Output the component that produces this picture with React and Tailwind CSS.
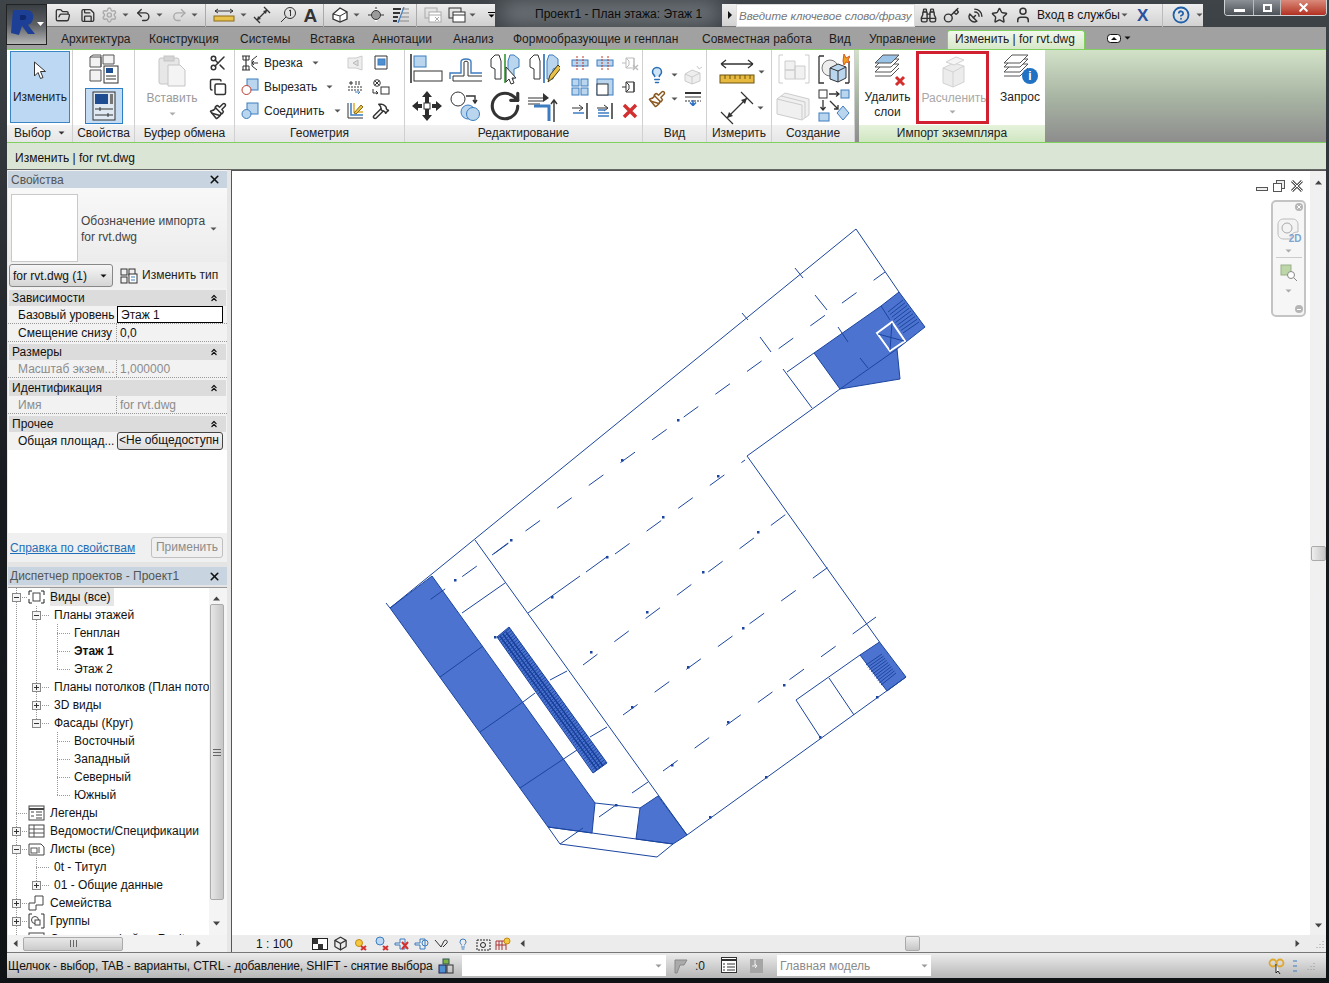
import React from 'react';
import {
  FolderOpen, Save, Undo2, Redo2, Scissors, Copy, Paintbrush, Lightbulb, Hammer, X, ChevronsUp,
  Key, Star, User, Binoculars, SatelliteDish, CircleHelp, RotateCw, Settings, Box
} from 'lucide-react';

const S = ({ w = 16, h = 16, className = '', children }) => (
  <svg width={w} height={h} viewBox={`0 0 ${w} ${h}`} fill="none" className={`shrink-0 ${className}`}>{children}</svg>
);

const Caret = ({ c = '#555', className = '' }) => (
  <S w={7} h={4} className={className}><path d="M0.5 0.5H6.5L3.5 3.5Z" fill={c} /></S>
);

const BLUE = '#3d7cc0';
const LB = '#b9d6ee';
const DK = '#333';

// --- quick access toolbar ---
const MeasureIc = () => (
  <S w={22} h={14}>
    <path d="M2 3H20M2 3L5 1M2 3L5 5M20 3L17 1M20 3L17 5" stroke={DK} />
    <rect x="1" y="8" width="20" height="5" fill="#e8c14a" stroke="#8a6d1b" />
  </S>
);
const AlignedIc = () => (
  <S w={20} h={20}>
    <path d="M2 12L8 18M12 2L18 8M5 15L15 5" stroke={DK} strokeWidth="1.3" />
    <path d="M5 15L9 14L6 11ZM15 5L11 6L14 9Z" fill={DK} />
  </S>
);
const TagIc = () => (
  <S w={18} h={18}>
    <circle cx="11" cy="7" r="5.5" stroke={DK} />
    <path d="M7 11L2 16" stroke={DK} />
    <path d="M10 5L11.5 4V10" stroke={DK} />
  </S>
);
const HouseIc = () => (
  <S w={18} h={18}>
    <path d="M2 8L9 2L16 6V13L9 16L2 13Z" stroke={DK} strokeWidth="1.3" fill="#fff" />
    <path d="M2 8L9 10L16 6M9 10V16" stroke={DK} />
  </S>
);
const SectionIc = () => (
  <S w={16} h={16}>
    <path d="M8 1L14 8L8 15L2 8Z" fill="#fff" />
    <circle cx="8" cy="8" r="4.5" fill="#9a9a9a" stroke={DK} />
    <path d="M0 8H3M13 8H16M8 0V2" stroke={DK} />
  </S>
);
const ThinIc = () => (
  <S w={18} h={16}>
    <path d="M1 2H9M1 6H8M1 10H6M1 14H5" stroke={DK} strokeWidth="2" />
    <path d="M10 2H17M10 6H17M8 10H17M7 14H17" stroke="#888" />
    <path d="M12 0L6 16" stroke="#3d7cc0" strokeWidth="1.2" />
  </S>
);
const WinIc = ({ gray }) => (
  <S w={18} h={16}>
    <rect x="1" y="1" width="12" height="10" stroke={gray ? '#aaa' : DK} />
    <rect x="5" y="5" width="12" height="10" fill="#fff" stroke={gray ? '#aaa' : DK} />
    <path d="M5 8H17" stroke={gray ? '#aaa' : DK} />
    {gray && <path d="M11 10L15 14M15 10L11 14" stroke="#aaa" />}
  </S>
);

const QAT = () => (
  <div className="w-[448px] h-[23px] shrink-0 flex items-center pl-[7px] bg-gradient-to-b from-[#eeeeee] to-[#cfcfcf] border-b border-[#777]">
    <FolderOpen size={17} color={DK} className="ml-px" />
    <Save size={17} color={DK} className="ml-[9px]" />
    <Settings size={18} color="#aaa" className="ml-[6px]" />
    <Caret className="ml-[4px]" />
    <Undo2 size={18} color={DK} className="ml-[6px]" />
    <Caret className="ml-[4px]" />
    <Redo2 size={18} color="#aaa" className="ml-[8px]" />
    <Caret className="ml-[4px]" />
    <div className="w-px h-[23px] bg-[#aaa] ml-[7px]" />
    <div className="ml-[7px]"><MeasureIc /></div>
    <Caret className="ml-[5px]" />
    <div className="ml-[5px]"><AlignedIc /></div>
    <div className="ml-[7px]"><TagIc /></div>
    <span className="ml-[6px] text-[19px] font-bold text-[#333] leading-none">A</span>
    <div className="w-px h-[23px] bg-[#aaa] ml-[6px]" />
    <div className="ml-[7px]"><HouseIc /></div>
    <Caret className="ml-[4px]" />
    <div className="ml-[8px]"><SectionIc /></div>
    <div className="ml-[8px]"><ThinIc /></div>
    <div className="w-px h-[23px] bg-[#aaa] ml-[6px]" />
    <div className="ml-[7px]"><WinIc gray /></div>
    <div className="ml-[6px]"><WinIc /></div>
    <Caret className="ml-[3px]" />
    <div className="ml-[12px] flex flex-col items-center gap-px"><div className="w-[7px] h-px bg-black" /><Caret c="#000" /></div>
  </div>
);

const InfoCenter = () => (
  <div className="w-[481px] h-[23px] shrink-0 flex items-center bg-gradient-to-b from-[#eeeeee] to-[#d2d2d2] border-b border-[#777]">
    <S w={6} h={8} className="ml-[5px]"><path d="M1 0L5 4L1 8Z" fill="#111" /></S>
    <div className="ml-[3px] w-[179px] h-[23px] bg-white border border-[#ddd] pl-[2px] text-[11.5px] italic text-[#777] leading-[23px] whitespace-nowrap overflow-hidden">Введите ключевое слово/фразу</div>
    <Binoculars size={17} color={DK} className="ml-[5px]" />
    <Key size={17} color={DK} className="ml-[6px]" />
    <SatelliteDish size={17} color={DK} className="ml-[7px]" />
    <Star size={17} color={DK} className="ml-[7px]" />
    <User size={18} color={DK} className="ml-[6px]" />
    <span className="ml-[5px] text-[12px] text-[#111] whitespace-nowrap w-[82px]">Вход в службы</span>
    <Caret className="ml-[2px]" />
    <span className="ml-[9px] text-[17px] font-black text-[#2c4f9e] leading-none w-[16px]">X</span>
    <div className="w-px h-[23px] bg-[#bbb] ml-[9px]" />
    <CircleHelp size={18} color="#1d5fa8" strokeWidth={2.4} className="ml-[9px]" />
    <Caret className="ml-[6px]" />
  </div>
);

const WinButtons = () => (
  <div className="ml-[21px] w-[103px] h-[16px] shrink-0 flex rounded-b-[4px] border border-t-0 border-[#cfd3d6] overflow-hidden">
    <div className="w-[29px] flex items-end justify-center pb-[3px] bg-gradient-to-b from-[#8b9197] to-[#4c5257] border-r border-[#bbb]"><div className="w-[11px] h-[3px] bg-white" /></div>
    <div className="w-[27px] flex items-center justify-center bg-gradient-to-b from-[#8b9197] to-[#4c5257] border-r border-[#bbb]"><div className="w-[9px] h-[8px] border-2 border-white" /></div>
    <div className="flex-1 flex items-center justify-center bg-gradient-to-b from-[#d9897a] to-[#b32e20]"><X size={13} color="#fff" strokeWidth={4} /></div>
  </div>
);

const Logo = () => (
  <div className="absolute left-[6px] top-[4px] w-[41px] h-[41px] border border-[#222] bg-gradient-to-b from-[#3a3f44] via-[#5c6064] to-[#b5b5b5] z-10">
    <S w={39} h={39}>
      <path d="M6 5H19C25 5 27 9 26 14C25 18 23 19 21 20L28 29H21L15 21L12 30L4 28Z" fill="#1d3f96" />
      <path d="M13 10L17 10C20 10 20 14 17 15L13 15Z" fill="#0f2a70" />
      <path d="M30 17H37L33.5 21Z" fill="#fff" />
    </S>
  </div>
);

// --- ribbon icons ---
const Cursor = () => (
  <S w={15} h={19}><path d="M1.5 1V15L5 11.5L7.5 17.5L10 16.5L7.5 10.5H12.5Z" fill="#fff" stroke={DK} /></S>
);
const Cubes = () => (
  <S w={32} h={30}>
    <path d="M2 3H13V13H2ZM15 1H26V10H15ZM2 16H13V27H2Z" fill="#f2f2f2" stroke="#555" />
    <path d="M5 1H13M2 3L5 1M13 1V13" stroke="#555" />
    <rect x="16" y="12" width="14" height="17" fill="#fff" stroke={DK} />
    <rect x="18" y="14" width="7" height="5" fill="#1f4d91" />
    <path d="M18 22H28M18 25H28" stroke={DK} />
  </S>
);
const Props = () => (
  <S w={24} h={30}>
    <rect x="1" y="1" width="22" height="28" fill="#dfe9f3" stroke={DK} />
    <rect x="3" y="3" width="13" height="10" fill="#1f4d91" />
    <rect x="18" y="3" width="3" height="10" fill="#777" />
    <path d="M3 18H21M3 24H21M8 16V20M16 22V26" stroke={DK} />
  </S>
);
const Clip = () => (
  <S w={28} h={32}>
    <rect x="1" y="3" width="20" height="26" rx="2" fill="#e7e7e7" stroke="#c5c5c5" />
    <rect x="6" y="1" width="10" height="5" fill="#d5d5d5" stroke="#c5c5c5" />
    <path d="M10 10H22L27 15V31H10Z" fill="#f4f4f4" stroke="#c5c5c5" />
  </S>
);
const Cope = () => (
  <S w={18} h={16}>
    <path d="M1 1H9M1 15H9M5 1V15" stroke={DK} strokeWidth="1.2" />
    <path d="M2 1V5H8V1M2 15V11H8V15" stroke={DK} />
    <path d="M16 1L11 5V11L16 15M17 8H11M13 6L11 8L13 10" stroke={DK} />
  </S>
);
const CutGeo = () => (
  <S w={18} h={18}>
    <rect x="6" y="1" width="11" height="11" fill={LB} stroke={BLUE} />
    <circle cx="5.5" cy="12" r="4.5" fill="#fff" stroke="#c0392b" />
  </S>
);
const JoinGeo = () => (
  <S w={18} h={18}>
    <rect x="6" y="1" width="11" height="11" fill={LB} stroke={BLUE} />
    <circle cx="5.5" cy="12" r="4.5" fill={LB} stroke={BLUE} />
  </S>
);
const Wall1 = () => (
  <S w={16} h={16}>
    <path d="M1 3H9L15 1V15L9 13H1Z" fill="#eee" stroke="#ccc" />
    <path d="M6 8L11 5V11Z" fill="#ddd" stroke="#bbb" />
  </S>
);
const Wall2 = () => (
  <S w={16} h={16}>
    <path d="M2 1H14V14H2Z" fill="#fff" stroke="#333" />
    <rect x="5" y="4" width="7" height="6" fill="#4d8fd1" stroke={BLUE} />
  </S>
);
const Lines2 = () => (
  <S w={17} h={15}>
    <path d="M4 1V5M2 3H6" stroke={DK} /><path d="M9 1V5M12 1V5" stroke={DK} />
    <path d="M1 7H16M1 10H16" stroke={DK} strokeDasharray="2 1" />
    <path d="M8 12H13M11 14L13 12" stroke={BLUE} />
  </S>
);
const Cut3 = () => (
  <S w={18} h={16}>
    <circle cx="5" cy="4" r="3.3" stroke={DK} /><path d="M3 2L7 6M7 2L3 6" stroke={DK} />
    <rect x="9" y="8" width="8" height="7" fill="#fff" stroke={DK} />
    <path d="M1 10V14H6M4 12L6 14L4 15" stroke={DK} />
  </S>
);
const Corner = () => (
  <S w={18} h={18}>
    <path d="M2 1V16H17" stroke={DK} /><path d="M5 1V13H17" stroke={BLUE} strokeWidth="1.5" />
    <path d="M8 1V10H17" stroke="#e0a92e" strokeWidth="1.5" />
    <path d="M8 11L15 3L17 5L10 12Z" fill="#e8c14a" stroke="#8a6d1b" />
  </S>
);

const Align = () => (
  <S w={34} h={30}>
    <path d="M1 0V29" stroke={DK} strokeWidth="1.6" />
    <rect x="4" y="2" width="12" height="11" fill={LB} stroke={BLUE} />
    <rect x="4" y="17" width="28" height="10" fill="#fff" stroke={DK} />
  </S>
);
const Offset = () => (
  <S w={34} h={26}>
    <path d="M1 23V17H12V6C12 2 22 2 22 6V17H33" stroke={BLUE} strokeWidth="1.4" />
    <path d="M4 25H33M4 25V20H15V6C15 5 19 5 19 6V20H33" stroke={DK} />
  </S>
);
const Mirror = ({ draw }) => (
  <S w={32} h={32}>
    <path d="M2 6L6 2H10L12 8V26H6L6 16L2 14Z" fill="#fff" stroke={DK} />
    <path d="M16 1V30" stroke={draw ? '#3d7cc0' : '#4aa34a'} strokeWidth="1.8" />
    <path d="M30 6L25 2H21L19 8V26H25V16L30 14Z" fill={LB} stroke={BLUE} />
    {draw
      ? <path d="M20 29L22 22L30 12L33 15L25 25Z" fill="#e8c14a" stroke="#4a3a10" />
      : <path d="M17 14V29L20 26L22 31L25 30L23 25H27Z" fill="#fff" stroke={DK} />}
  </S>
);
const MoveIc = () => (
  <S w={32} h={32}>
    <path d="M16 1L21 7H18V13H14V7H11ZM16 31L21 25H18V19H14V25H11ZM1 16L7 11V14H11V18H7V21ZM31 16L25 11V14H21V18H25V21Z" fill="#2d2d2d" />
    <rect x="13" y="13" width="6" height="6" fill="#fff" stroke={DK} />
  </S>
);
const CopyMv = () => (
  <S w={32} h={30}>
    <circle cx="8" cy="8" r="7" fill="#fff" stroke={DK} />
    <path d="M16 5H25V11M23 9L25 12L27 9" stroke={DK} strokeWidth="1.4" />
    <circle cx="18" cy="21" r="7" fill={LB} stroke={BLUE} />
    <circle cx="23" cy="23" r="6.5" fill={LB} stroke={BLUE} />
  </S>
);
const Trim = () => (
  <S w={34} h={34}>
    <path d="M1 9H20M1 12H16M1 15H13" stroke={DK} />
    <path d="M16 4L22 9L16 13Z" fill={DK} />
    <path d="M7 17H22V32" stroke={BLUE} strokeWidth="3" fill="none" />
    <path d="M27 33V12M24 15L27 11L30 15" stroke={DK} strokeWidth="1.4" />
  </S>
);
const SplitA = () => (
  <S w={18} h={14}>
    <rect x="1" y="4" width="16" height="6" fill={LB} stroke={BLUE} />
    <path d="M6 0V14M12 0V14" stroke="#c0392b" strokeDasharray="2 1" />
  </S>
);
const GridA = () => (
  <S w={18} h={18}><rect x="1" y="1" width="7" height="7" stroke={BLUE} fill={LB} /><rect x="10" y="1" width="7" height="7" stroke={BLUE} fill={LB} /><rect x="1" y="10" width="7" height="7" stroke={BLUE} fill={LB} /><rect x="10" y="10" width="7" height="7" stroke={BLUE} fill={LB} /></S>
);
const ScaleA = () => (
  <S w={18} h={18}><rect x="1" y="1" width="16" height="16" fill={LB} stroke={BLUE} /><rect x="1" y="6" width="11" height="11" fill="#fff" stroke={DK} /></S>
);
const PinOff = ({ x }) => (
  <S w={18} h={18}>
    <path d="M1 9H5M5 4H13V14H5ZM13 4V14M5 4L8 7V11L5 14" stroke={x ? '#bbb' : DK} />
    {x && <path d="M12 11L17 16M17 11L12 16" stroke="#bbb" strokeWidth="1.4" />}
  </S>
);
const Extend = ({ many }) => (
  <S w={18} h={18}>
    <path d="M16 1V17" stroke={DK} strokeWidth="1.5" />
    <path d="M1 6H11M8 3L12 6L8 9" stroke={DK} />
    <path d="M2 11H13" stroke={BLUE} strokeWidth="1.5" />
    {many && <path d="M2 14H13M2 8H9" stroke={BLUE} strokeWidth="1.5" />}
  </S>
);
const RedX = () => (
  <S w={16} h={16}><path d="M2 2L14 14M14 2L2 14" stroke="#d32f2f" strokeWidth="3.4" /></S>
);
const GrayBox = () => (
  <S w={22} h={20}>
    <path d="M3 9L10 5L18 8V16L10 19L3 16Z" fill="#eee" stroke="#ccc" />
    <path d="M3 9L10 12L18 8M10 12V19" stroke="#ccc" />
    <path d="M15 1L17 4L20 2" stroke="#ccc" />
  </S>
);
const Lw = () => (
  <S w={18} h={14}>
    <path d="M1 1H17" stroke={DK} strokeWidth="2" />
    <path d="M1 5H17" stroke={DK} />
    <path d="M1 9H17" stroke={DK} strokeDasharray="2 1" />
    <path d="M9 8V13M6 10.5L9 13.5L12 10.5" stroke="#2b6fc4" strokeWidth="1.6" />
  </S>
);
const RulerIc = () => (
  <S w={36} h={28}>
    <path d="M2 6H34M2 6L7 2M2 6L7 10M34 6L29 2M34 6L29 10" stroke={DK} strokeWidth="1.3" />
    <rect x="1" y="17" width="34" height="8" fill="#e7b93f" stroke="#6d5410" />
    <path d="M6 17V21M11 17V21M16 17V21M21 17V21M26 17V21M31 17V21" stroke="#6d5410" />
  </S>
);
const DimIc = () => (
  <S w={34} h={34}>
    <path d="M1 21L13 33M21 1L33 13M7 27L27 7" stroke={DK} strokeWidth="1.2" />
    <path d="M7 27L13 25L9 21ZM27 7L21 9L25 13Z" fill={DK} />
  </S>
);
const GroupGray = () => (
  <S w={32} h={30}>
    <path d="M1 1H5M1 1V29H5M31 1H27M31 1V29H27" stroke="#ccc" />
    <path d="M7 7H17V16H7ZM17 12H27V25H17ZM7 16H17V25H7Z" fill="#f1f1f1" stroke="#ccc" />
  </S>
);
const InPlace = () => (
  <S w={32} h={32}>
    <path d="M1 3H6M1 3V30H6M31 30H27M31 30V8" stroke={DK} strokeWidth="1.3" />
    <circle cx="12" cy="15" r="8" fill="#eee" stroke="#777" />
    <path d="M12 15L20 11L28 14V25L20 29L12 26Z" fill={LB} stroke={DK} />
    <path d="M12 15L20 18L28 14M20 18V29" stroke={DK} />
    <path d="M26 1L28 5L32 3L30 7L32 10L28 9L26 12L25 8Z" fill="#f0a020" stroke="#d9541e" />
  </S>
);
const Stack = () => (
  <S w={36} h={32}>
    <path d="M1 9L9 3L33 9V25L26 30L1 24Z" fill="#f0f0f0" stroke="#ccc" />
    <path d="M5 6L29 12V28M1 9L26 15V30" stroke="#ccc" />
  </S>
);
const CreateIc = () => (
  <S w={32} h={34}>
    <rect x="1" y="1" width="8" height="8" fill="#fff" stroke={DK} />
    <rect x="23" y="1" width="8" height="8" fill={LB} stroke={BLUE} />
    <path d="M11 5H21M18 2.5L21 5L18 7.5M5 11V21M2.5 18L5 21L7.5 18M12 12L20 20M16 20H20V16" stroke={DK} strokeWidth="1.3" />
    <rect x="1" y="24" width="10" height="8" fill={LB} stroke={BLUE} />
    <path d="M25 17L31 24L25 31L19 24Z" fill={LB} stroke={BLUE} />
  </S>
);
const Layers = ({ gray }) => (
  <S w={28} h={26}>
    <path d="M2 18H18L26 10H10Z" fill="#fff" stroke="#555" />
    <path d="M2 22H18L26 14" stroke="#555" />
    <path d="M2 13H18L26 5H10Z" fill="#fff" stroke="#555" />
    <path d="M2 9H18L26 1H10Z" fill={gray ? '#fff' : '#9cc4e6'} stroke="#555" />
  </S>
);
const Explode = () => (
  <S w={26} h={32}>
    <path d="M3 12L14 7L24 10V26L13 31L3 27Z" fill="#ececec" stroke="#d2d2d2" />
    <path d="M3 12L13 16L24 10M13 16V31" stroke="#d2d2d2" />
    <path d="M6 6L16 1L24 4L14 9Z" fill="#f5f5f5" stroke="#d2d2d2" />
  </S>
);

const Panel = ({ className = '', label, caret, green, children }) => (
  <div className={`flex flex-col border-r border-[#d0d0d0] bg-white ${className}`}>
    <div className="h-[75px] flex">{children}</div>
    <div className={`h-[17px] pb-[2px] flex items-center justify-center gap-[7px] text-[12px] text-[#222] whitespace-nowrap ${green ? 'bg-gradient-to-b from-[#e6f2dc] to-[#cfe6c0]' : 'bg-gradient-to-b from-[#f2f2f2] to-[#e6e6e6]'}`}>
      {label}{caret && <Caret c="#333" />}
    </div>
  </div>
);

const GeoRow = ({ icon, label, className = '' }) => (
  <div className={`h-[24px] flex items-center ${className}`}>
    <div className="w-[22px] flex justify-center">{icon}</div>
    <span className="ml-[3px] text-[12px] text-[#222] whitespace-nowrap">{label}</span>
    <Caret className="ml-[9px]" />
  </div>
);

const Cell = ({ className = '', children }) => <div className={`flex items-center justify-center ${className}`}>{children}</div>;

const Ribbon = () => (
  <div className="h-[94px] flex border-y border-[#7fd05e] bg-gradient-to-b from-[#d2e2c8] via-[#a9b6a4] to-[#8d8d8d]">
    <Panel className="w-[66px]" label="Выбор" caret>
      <div className="m-[1px] ml-[3px] w-[60px] h-[72px] bg-[#bcd8f2] border border-[#3c86c6] flex flex-col items-center pt-[9px]">
        <Cursor />
        <span className="mt-[8px] text-[12px] text-[#222]">Изменить</span>
      </div>
    </Panel>
    <Panel className="w-[62px]" label="Свойства">
      <div className="flex-1 flex flex-col items-center pt-[4px]">
        <Cubes />
        <div className="mt-[4px] w-[38px] h-[36px] bg-[#c5dcf3] border border-[#2d7fc8] flex items-center justify-center"><Props /></div>
      </div>
    </Panel>
    <Panel className="w-[100px]" label="Буфер обмена">
      <div className="w-[72px] flex flex-col items-center pt-[5px] pl-[2px]">
        <Clip />
        <span className="mt-[2px] text-[12px] text-[#9a9a9a]">Вставить</span>
        <Caret c="#aaa" className="mt-[5px]" />
      </div>
      <div className="flex flex-col items-center gap-[6px] pt-[4px] ml-[2px]">
        <Scissors size={18} color={DK} />
        <Copy size={18} color={DK} />
        <Paintbrush size={18} color={DK} />
      </div>
    </Panel>
    <Panel className="w-[170px]" label="Геометрия">
      <div className="w-[107px] pt-px pl-[4px]">
        <GeoRow icon={<Cope />} label="Врезка" />
        <GeoRow icon={<CutGeo />} label="Вырезать" />
        <GeoRow icon={<JoinGeo />} label="Соединить" />
      </div>
      <div className="w-[26px] pt-px flex flex-col">
        <Cell className="h-[24px]"><Wall1 /></Cell>
        <Cell className="h-[24px]"><Lines2 /></Cell>
        <Cell className="h-[24px]"><Corner /></Cell>
      </div>
      <div className="w-[26px] pt-px flex flex-col">
        <Cell className="h-[24px]"><Wall2 /></Cell>
        <Cell className="h-[24px] gap-[3px]"><Cut3 /></Cell>
        <Cell className="h-[24px]"><Hammer size={18} color={DK} /></Cell>
      </div>
    </Panel>
    <Panel className="w-[238px]" label="Редактирование">
      <div className="ml-[3px] w-[157px] grid grid-cols-4 auto-rows-[37px]">
        <Cell><Align /></Cell>
        <Cell><Offset /></Cell>
        <Cell><Mirror /></Cell>
        <Cell><Mirror draw /></Cell>
        <Cell><MoveIc /></Cell>
        <Cell><CopyMv /></Cell>
        <Cell><RotateCw size={34} color={DK} strokeWidth={2.2} /></Cell>
        <Cell><Trim /></Cell>
      </div>
      <div className="ml-[5px] pt-px w-[75px] grid grid-cols-3 auto-rows-[24px]">
        <Cell><SplitA /></Cell>
        <Cell><SplitA /></Cell>
        <Cell><PinOff x /></Cell>
        <Cell><GridA /></Cell>
        <Cell><ScaleA /></Cell>
        <Cell><PinOff /></Cell>
        <Cell><Extend /></Cell>
        <Cell><Extend many /></Cell>
        <Cell><RedX /></Cell>
      </div>
    </Panel>
    <Panel className="w-[64px]" label="Вид">
      <div className="pt-[13px] grid grid-cols-[22px_12px_26px] auto-rows-[24px] pl-[3px]">
        <Cell><Lightbulb size={18} color="#2a6fb5" fill="#cfe4f7" /></Cell>
        <Cell><Caret /></Cell>
        <Cell><GrayBox /></Cell>
        <Cell><Paintbrush size={18} color="#8a5a20" /></Cell>
        <Cell><Caret /></Cell>
        <Cell><Lw /></Cell>
      </div>
    </Panel>
    <Panel className="w-[65px]" label="Измерить">
      <div className="flex-1 flex flex-col">
        <Cell className="h-[41px] pt-[3px] gap-[3px] pl-[6px]"><RulerIc /><Caret /></Cell>
        <Cell className="h-[34px] gap-[3px] pl-[6px]"><DimIc /><Caret /></Cell>
      </div>
    </Panel>
    <Panel className="w-[83px]" label="Создание">
      <div className="flex-1 grid grid-cols-2 grid-rows-[37px_38px] pl-[2px]">
        <Cell><GroupGray /></Cell>
        <Cell><InPlace /></Cell>
        <Cell><Stack /></Cell>
        <Cell><CreateIc /></Cell>
      </div>
    </Panel>
    <div className="w-[4px]" />
    <Panel className="w-[186px] border-r-0" label="Импорт экземпляра" green>
      <div className="w-[57px] flex flex-col items-center pt-[4px]">
        <div className="relative h-[33px] w-[30px]">
          <Layers />
          <S w={12} h={12} className="absolute right-[-3px] bottom-0"><path d="M2 2L10 10M10 2L2 10" stroke="#d32f2f" strokeWidth="3" /></S>
        </div>
        <span className="mt-[3px] text-[12px] leading-[15px] text-center text-[#222]">Удалить<br />слои</span>
      </div>
      <div className="w-[73px] h-[73px] mt-px border-[3px] border-[#d1202f] flex flex-col items-center pt-[2px]">
        <Explode />
        <span className="mt-[1px] pl-[3px] text-[12px] text-[#a8a8a8]">Расчленить</span>
        <Caret c="#aaa" className="mt-[3px]" />
      </div>
      <div className="flex-1 flex flex-col items-center pt-[4px] pl-[6px]">
        <div className="relative h-[33px] w-[36px]">
          <Layers gray />
          <div className="absolute right-0 bottom-[3px] w-[16px] h-[16px] rounded-full bg-[#2272c3] text-white text-[12px] font-bold leading-[16px] text-center">i</div>
        </div>
        <span className="mt-[1px] text-[12px] text-[#222]">Запрос</span>
      </div>
    </Panel>
  </div>
);

const TABS = [
  ['Архитектура', 'w-[88px]'], ['Конструкция', 'w-[91px]'], ['Системы', 'w-[70px]'], ['Вставка', 'w-[62px]'],
  ['Аннотации', 'w-[81px]'], ['Анализ', 'w-[60px]'], ['Формообразующие и генплан', 'w-[189px]'],
  ['Совместная работа', 'w-[127px]'], ['Вид', 'w-[40px]'], ['Управление', 'w-[88px]'],
];

const Tabs = () => (
  <div className="h-[22px] flex items-end pl-[44px] bg-[#a1a1a1] text-[12px] text-[#1c1c1c] whitespace-nowrap">
    {TABS.map(([t, w]) => <div key={t} className={`${w} h-[22px] pl-[10px] leading-[24px]`}>{t}</div>)}
    <div className="w-[138px] h-[19px] pl-[7px] leading-[16px] rounded-t-[3px] border border-b-0 border-[#7fd05e] bg-gradient-to-b from-[#f2f8ec] to-[#d6e8c8]">Изменить | for rvt.dwg</div>
    <S w={14} h={9} className="ml-[22px] mb-[6px]"><rect x="0.5" y="0.5" width="13" height="8" rx="3" fill="#fff" stroke="#111" /><path d="M4 6H10L7 3Z" fill="#111" /></S>
    <Caret c="#111" className="ml-[3px] mb-[9px]" />
  </div>
);

// --- properties ---
const SectionHead = ({ label }) => (
  <div className="h-[16px] mt-[2px] mx-[1px] flex items-center justify-between pl-[3px] pr-[7px] bg-[#dcdcdc] text-[12px] text-[#111]">
    {label}<ChevronsUp size={10} strokeWidth={3} color="#111" />
  </div>
);
const Row = ({ label, value, gray }) => (
  <div className={`h-[18px] flex text-[12px] border-b border-dotted border-[#999] ${gray ? 'text-[#8c8c8c]' : 'text-[#111]'}`}>
    <div className="w-[109px] pl-[10px] leading-[18px] truncate border-r border-dotted border-[#999]">{label}</div>
    <div className="flex-1 pl-[3px] leading-[18px] whitespace-nowrap overflow-hidden">{value}</div>
  </div>
);

const Properties = () => (
  <div className="flex flex-col">
    <div className="h-[17px] mt-px flex items-center justify-between pl-[3px] pr-[6px] bg-[#c8d4df] text-[12px] text-[#555]">
      Свойства <X size={13} color="#111" strokeWidth={3} />
    </div>
    <div className="h-[74px] flex items-end bg-gradient-to-b from-[#f8f8f8] to-[#ececec] pl-[3px] pr-[3px]">
      <div className="w-[67px] h-[68px] bg-white border border-[#c9c9c9]" />
      <div className="ml-[3px] mb-[17px] text-[12px] leading-[16px] text-[#444] whitespace-nowrap w-[129px]">Обозначение импорта<br />for rvt.dwg</div>
      <Caret className="mb-[31px]" />
    </div>
    <div className="h-[26px] pt-px flex items-center bg-[#f0f0f0] pl-px">
      <div className="w-[104px] h-[23px] flex items-center justify-between pl-[3px] pr-[5px] rounded-[3px] border border-[#888] bg-gradient-to-b from-[#f6f6f6] to-[#d5d5d5] text-[12px] text-[#111] whitespace-nowrap">for rvt.dwg (1)<Caret c="#111" /></div>
      <S w={18} h={16} className="ml-[7px]"><rect x="1" y="1" width="6" height="6" stroke={DK} /><rect x="9" y="1" width="6" height="6" stroke={DK} /><rect x="1" y="9" width="6" height="6" stroke={DK} /><rect x="9" y="6" width="8" height="9" fill="#fff" stroke={DK} /><path d="M11 9H15M11 12H15" stroke={BLUE} /></S>
      <span className="ml-[4px] mb-[2px] text-[12px] text-[#222] whitespace-nowrap">Изменить тип</span>
    </div>
    <SectionHead label="Зависимости" />
    <div className="h-[18px] flex text-[12px] text-[#111] border-b border-dotted border-[#999]">
      <div className="w-[109px] pl-[10px] leading-[18px] truncate">Базовый уровень</div>
      <div className="w-[106px] pl-[3px] leading-[16px] border border-black bg-white">Этаж 1</div>
    </div>
    <Row label="Смещение снизу" value="0,0" />
    <SectionHead label="Размеры" />
    <Row label="Масштаб экзем..." value="1,000000" gray />
    <SectionHead label="Идентификация" />
    <Row label="Имя" value="for rvt.dwg" gray />
    <SectionHead label="Прочее" />
    <div className="h-[18px] flex text-[12px] text-[#111]">
      <div className="w-[109px] pl-[10px] leading-[18px] truncate">Общая площад...</div>
      <div className="w-[106px] pl-[1px] leading-[15px] rounded-[3px] border border-[#444] bg-gradient-to-b from-[#f4f4f4] to-[#dcdcdc] overflow-hidden whitespace-nowrap">&lt;Не общедоступн</div>
    </div>
    <div className="h-[83px] bg-white" />
    <div className="h-[29px] flex items-center justify-between pl-[2px] pr-[4px] bg-[#f0f0f0]">
      <span className="text-[12px] text-[#1f6fb8] underline">Справка по свойствам</span>
      <div className="w-[72px] h-[21px] rounded-[3px] border border-[#c0c0c0] text-center text-[12px] leading-[19px] text-[#8c8c8c]">Применить</div>
    </div>
    <div className="h-[5px] bg-[#e4e4e4]" />
  </div>
);

// --- project browser ---
const TREE = [
  { t: 'Виды (все)', d: 0, e: '-', ic: 'view', sel: true, v: [16] },
  { t: 'Планы этажей', d: 1, e: '-', v: [16, 36] },
  { t: 'Генплан', d: 2, v: [16, 36, 57] },
  { t: 'Этаж 1', d: 2, bold: true, v: [16, 36, 57] },
  { t: 'Этаж 2', d: 2, v: [16, 36], half: 57 },
  { t: 'Планы потолков (План потолка)', d: 1, e: '+', v: [16, 36] },
  { t: '3D виды', d: 1, e: '+', v: [16, 36] },
  { t: 'Фасады (Круг)', d: 1, e: '-', v: [16], half: 36 },
  { t: 'Восточный', d: 2, v: [16, 57] },
  { t: 'Западный', d: 2, v: [16, 57] },
  { t: 'Северный', d: 2, v: [16, 57] },
  { t: 'Южный', d: 2, v: [16], half: 57 },
  { t: 'Легенды', d: 0, ic: 'legend', v: [16] },
  { t: 'Ведомости/Спецификации', d: 0, e: '+', ic: 'table', v: [16] },
  { t: 'Листы (все)', d: 0, e: '-', ic: 'sheet', v: [16] },
  { t: '0t - Титул', d: 1, v: [16, 36] },
  { t: '01 - Общие данные', d: 1, e: '+', v: [16], half: 36 },
  { t: 'Семейства', d: 0, e: '+', ic: 'family', v: [16] },
  { t: 'Группы', d: 0, e: '+', ic: 'group', v: [16] },
  { t: 'Связанные файлы Revit', d: 0, ic: 'link', half: 16 },
];
const TEXT_X = [42, 46, 66];
const EXP_X = [12, 32];

const TreeIcon = ({ k }) => {
  const p = { stroke: '#444', fill: '#fff' };
  if (k === 'view') return <g><path d="M24 3H21V7M33 3H36V7M21 11V15H24M36 11V15H33" stroke="#222" /><rect x="25" y="5" width="7" height="8" {...p} /></g>;
  if (k === 'legend') return <g><rect x="21" y="2" width="15" height="14" {...p} /><path d="M21 5H36" stroke="#444" strokeWidth="2" /><path d="M23 8H26M23 12H26M28 8H34M28 11H34M28 14H34" stroke="#444" /></g>;
  if (k === 'table') return <g><rect x="21" y="3" width="15" height="12" {...p} /><path d="M21 7H36M21 11H36M26 3V15" stroke="#555" /></g>;
  if (k === 'sheet') return <g><path d="M21 4H33L36 7V15H21Z" {...p} /><rect x="23" y="8" width="6" height="5" stroke="#555" /><path d="M31 7V13" stroke="#555" /></g>;
  if (k === 'family') return <g><path d="M21 9H27V2H35V11H28V16H21Z" {...p} /></g>;
  if (k === 'group') return <g><path d="M24 2H21V16H24M33 2H36V16H33" stroke="#333" /><circle cx="27" cy="8" r="3.5" {...p} /><rect x="27" y="8" width="5" height="5" {...p} /></g>;
  return <g><rect x="21" y="3" width="15" height="12" {...p} /></g>;
};

const TreeRow = ({ t, d, e, ic, sel, bold, v = [], half }) => {
  const textX = TEXT_X[d];
  const ex = EXP_X[Math.min(d, 1)];
  return (
    <div className="h-[18px] flex items-center">
      <svg width={textX} height={18} viewBox={`8 0 ${textX} 18`} className="shrink-0" fill="none">
        {v.map((x) => <path key={x} d={`M${x + 0.5} 0V18`} stroke="#999" strokeDasharray="1 1" />)}
        {half && <path d={`M${half + 0.5} 0V9`} stroke="#999" strokeDasharray="1 1" />}
        <path d={`M${d === 2 ? 57 : ex + 4} 9.5H${d === 0 ? 28 : d === 1 ? 50 : 70}`} stroke="#999" strokeDasharray="1 1" />
        {e && (
          <g>
            <rect x={ex + 0.5} y="5.5" width="8" height="8" fill="#f4f4f4" stroke="#888" />
            <path d={e === '+' ? `M${ex + 2} 9.5H${ex + 7}M${ex + 4.5} 7V12` : `M${ex + 2} 9.5H${ex + 7}`} stroke="#333" />
          </g>
        )}
        {ic && <g transform="translate(8 0)"><TreeIcon k={ic} /></g>}
      </svg>
      <span className={`text-[12px] text-[#111] whitespace-nowrap ${bold ? 'font-bold' : ''} ${sel ? 'bg-[#e6e6e6] pr-[3px] leading-[18px]' : ''}`}>{t}</span>
    </div>
  );
};

const ScrollArrow = ({ dir, c = '#444', className = '' }) => (
  <S w={7} h={7} className={className}>
    {dir === 'up' && <path d="M0 5.5H7L3.5 1.5Z" fill={c} />}
    {dir === 'down' && <path d="M0 1.5H7L3.5 5.5Z" fill={c} />}
    {dir === 'left' && <path d="M5.5 0V7L1.5 3.5Z" fill={c} />}
    {dir === 'right' && <path d="M1.5 0V7L5.5 3.5Z" fill={c} />}
  </S>
);

const Browser = () => (
  <div className="flex flex-col">
    <div className="h-[18px] flex items-center justify-between pl-[2px] pr-[6px] bg-[#c8d4df] text-[12px] text-[#555] whitespace-nowrap">
      Диспетчер проектов - Проект1 <X size={13} color="#111" strokeWidth={3} />
    </div>
    <div className="h-[2px] bg-[#e4e4e4]" />
    <div className="h-[348px] flex border-t border-[#999] bg-white overflow-hidden">
      <div className="w-[201px] overflow-hidden">
        {TREE.map((r) => <TreeRow key={r.t} {...r} />)}
      </div>
      <div className="flex-1 flex flex-col items-center bg-[#f4f4f4] pt-[7px] pr-[3px]">
        <ScrollArrow dir="up" />
        <div className="mt-[2px] w-[14px] h-[296px] rounded-[2px] border border-[#aaa] bg-gradient-to-r from-[#e6e6e6] to-[#c6c6c6] flex flex-col justify-center items-center gap-[2px]">
          <div className="w-[8px] h-px bg-[#666]" /><div className="w-[8px] h-px bg-[#666]" /><div className="w-[8px] h-px bg-[#666]" />
        </div>
        <ScrollArrow dir="down" className="mt-[20px]" />
      </div>
    </div>
    <div className="h-[17px] flex items-center bg-[#f2f2f2] pl-[4px] pr-[25px]">
      <ScrollArrow dir="left" />
      <div className="ml-[4px] w-[100px] h-[14px] rounded-[2px] border border-[#aaa] bg-gradient-to-b from-[#e8e8e8] to-[#cbcbcb] flex justify-center items-center gap-[2px]">
        <div className="w-px h-[7px] bg-[#666]" /><div className="w-px h-[7px] bg-[#666]" /><div className="w-px h-[7px] bg-[#666]" />
      </div>
      <ScrollArrow dir="right" className="ml-auto" />
    </div>
  </div>
);

// --- drawing ---
const FILL = '#4b73cf';
const LINE = '#1b459f';

const hatch = (a, b, c, d, n) => {
  const out = [];
  for (let i = 0; i <= n; i++) {
    const k = i / n;
    out.push([a[0] + (c[0] - a[0]) * k, a[1] + (c[1] - a[1]) * k, b[0] + (d[0] - b[0]) * k, b[1] + (d[1] - b[1]) * k]);
  }
  return out;
};

const POLYS = [
  '432,576 390,608 548,827 592,833 595,803',
  '640,808 658,796 687,835 673,844 636,839',
  '814,353 881,306 899,292 925,327 897,349 900,379 840,389',
  '860,655 879.5,642 906,677 887,691',
  '497,637 509,627 607,763 593,773',
];
const LINES = [
  [386, 603, 390, 608], [390, 608, 856, 229], [856, 229, 899, 292], [475, 540, 687, 835],
  [548, 827, 560, 844], [560, 844, 657, 857], [657, 857, 673, 844], [548, 827, 673, 844],
  [595, 803, 640, 808], [560, 844, 583, 828], [599, 817, 616, 805], [687, 835, 906, 677],
  [840, 389, 747, 456], [747, 456, 879.5, 642], [860, 655, 796, 700], [796, 700, 820, 737],
  [829, 678, 854, 715], [440, 677, 483, 646], [480, 732, 523, 702], [520, 788, 577, 750],
  [462, 613, 505, 583], [523, 702, 535, 693], [550, 680, 567, 671], [590, 737, 607, 727],
  [632, 793, 648, 782], [528, 613, 580, 576], [492, 555, 508, 543], [586, 572, 608, 556],
  [795, 268, 803, 278], [742, 313, 748, 320], [815, 295, 827, 310], [760, 337, 771, 352],
  [838, 327, 848, 342], [860, 358, 868, 368], [783, 369, 812, 408], [787, 372, 814, 353],
  [840, 389, 897, 349], [881, 306, 890, 320], [854, 633, 876, 617], [874, 280, 885, 272],
];
const AXES = [
  { a: [420, 607], b: [874, 280], o: 26 },
  { a: [615, 554], b: [745, 460], o: 0 },
  { a: [583, 665], b: [797, 506], o: 0 },
  { a: [623, 715], b: [838, 560], o: 0 },
  { a: [663, 771], b: [854, 633], o: 0 },
];
const DOTS = [
  [455, 580], [511, 540], [622, 460], [678, 420], [552, 597], [607, 557], [663, 517], [718, 476],
  [591, 652], [647, 612], [703, 572], [758, 532], [632, 707], [688, 667], [743, 628], [784, 685],
  [728, 722], [672, 765], [820, 737], [877, 697], [766, 777], [710, 817], [616, 805], [495, 637],
];

const Plan = () => (
  <svg width={1078} height={765} viewBox="232 171 1078 765" className="block" fill="none">
    {POLYS.map((p) => <polygon key={p} points={p} fill={FILL} stroke={LINE} strokeWidth="1" />)}
    {hatch([498, 638], [510, 628], [594, 772], [606, 762], 60).map((l, i) => (
      <path key={i} d={`M${l[0]} ${l[1]}L${l[2]} ${l[3]}`} stroke={LINE} strokeWidth="1" />
    ))}
    <path d="M503 634L600 768M506 632L603 766M500 636L597 770" stroke="#173f99" strokeWidth="1.4" />
    {hatch([888, 312], [903, 300], [903, 333], [919, 322], 8).map((l, i) => (
      <path key={i} d={`M${l[0]} ${l[1]}L${l[2]} ${l[3]}`} stroke={LINE} />
    ))}
    {hatch([866, 665], [882, 654], [881, 685], [896, 673], 9).map((l, i) => (
      <path key={i} d={`M${l[0]} ${l[1]}L${l[2]} ${l[3]}`} stroke={LINE} />
    ))}
    <polygon points="877,333 892,322 905,341 890,351" fill="none" stroke="#fff" strokeWidth="2" />
    <path d="M878 334L904 341M892 323L890 350" stroke={LINE} />
    {LINES.map((l, i) => <path key={i} d={`M${l[0]} ${l[1]}L${l[2]} ${l[3]}`} stroke={LINE} strokeWidth="1" />)}
    {AXES.map((x, i) => (
      <path key={i} d={`M${x.a[0]} ${x.a[1]}L${x.b[0]} ${x.b[1]}`} stroke={LINE} strokeDasharray="18 21" strokeDashoffset={x.o} />
    ))}
    {DOTS.map((d, i) => <rect key={i} x={d[0] - 1} y={d[1] - 1} width="2.5" height="2.5" fill={LINE} />)}
  </svg>
);

const NavBar = () => (
  <div className="absolute right-[4px] top-[29px] w-[35px] h-[117px] rounded-[5px] border-2 border-[#c4c4c4] bg-[#f6f6f6] flex flex-col items-center">
    <div className="self-end mr-[1px] mt-[1px] w-[8px] h-[8px] rounded-full bg-[#b5b5b5] flex items-center justify-center"><X size={6} color="#fff" strokeWidth={4} /></div>
    <div className="relative mt-[6px] w-[26px] h-[26px]">
      <S w={26} h={26}>
        <path d="M8 2H16C20 2 22 4 22 8V15C16 15 15 18 15 22H8C4 22 2 20 2 16V8C2 4 4 2 8 2Z" fill="#f3f3f3" stroke="#bbb" />
        <circle cx="11" cy="11" r="5" stroke="#aaa" />
      </S>
      <span className="absolute right-0 bottom-[-1px] text-[10px] leading-none font-bold text-[#7da3cf]">2D</span>
    </div>
    <Caret c="#aaa" className="mt-[6px]" />
    <div className="w-[26px] h-px bg-[#ccc] mt-[4px]" />
    <S w={18} h={17} className="mt-[6px]"><rect x="1" y="1" width="10" height="10" fill="#bcd6a8" stroke="#9ab088" /><circle cx="11" cy="11" r="3.5" fill="#fff" stroke="#888" /><path d="M14 14L17 17" stroke="#888" /></S>
    <Caret c="#aaa" className="mt-[8px]" />
    <div className="mt-auto mb-[2px] mr-[1px] self-end w-[8px] h-[8px] rounded-full bg-[#b5b5b5] flex items-center justify-center"><div className="w-[4px] h-px bg-white" /></div>
  </div>
);

const ViewButtons = () => (
  <div className="absolute right-[7px] top-[9px]">
    <S w={47} h={12}>
      <rect x="0.5" y="7.5" width="11" height="3" stroke="#555" fill="#eee" />
      <rect x="20.5" y="0.5" width="8" height="8" stroke="#555" fill="#eee" />
      <rect x="17.5" y="3.5" width="8" height="8" stroke="#555" fill="#fff" />
      <path d="M36 1L46 11M46 1L36 11" stroke="#555" strokeWidth="3" />
      <path d="M36 1L46 11M46 1L36 11" stroke="#fff" strokeWidth="1" />
    </S>
  </div>
);

const ViewBar = () => (
  <div className="h-[17px] flex items-center bg-[#ececec] text-[12px] text-[#111]">
    <span className="ml-[24px] w-[56px] whitespace-nowrap">1 : 100</span>
    <S w={16} h={12}><rect x="0.5" y="0.5" width="15" height="11" fill="#fff" stroke="#222" /><rect x="1" y="1" width="5" height="5" fill="#333" /><rect x="6" y="6" width="5" height="5" fill="#333" /></S>
    <Box size={15} color="#333" className="ml-[5px]" />
    <S w={15} h={15} className="ml-[4px]"><circle cx="7" cy="7" r="3.5" fill="#f5c842" stroke="#c28a10" /><path d="M9 10L14 14M14 10L9 14" stroke="#d32f2f" strokeWidth="2" /></S>
    <S w={15} h={15} className="ml-[7px]"><circle cx="6" cy="5" r="4" fill="#bcd8f2" stroke={BLUE} /><path d="M9 10L14 14M14 10L9 14" stroke="#d32f2f" strokeWidth="2" /></S>
    <S w={15} h={15} className="ml-[5px]"><path d="M1 7H6V3H11V13H6V9H1Z" stroke={BLUE} /><path d="M8 6L14 13M14 6L8 13" stroke="#d32f2f" strokeWidth="2" /></S>
    <S w={15} h={15} className="ml-[5px]"><path d="M1 7H6V3H11V13H6V9H1Z" stroke={BLUE} /><circle cx="11" cy="7" r="3" stroke={BLUE} /></S>
    <S w={15} h={12} className="ml-[5px]"><path d="M1 2L7 9L10 3C12 1 14 3 13 5L9 9" stroke="#333" /></S>
    <Lightbulb size={12} color={BLUE} className="ml-[8px]" />
    <S w={15} h={14} className="ml-[7px]"><rect x="1" y="3" width="13" height="10" stroke="#222" strokeDasharray="2 1" /><circle cx="7" cy="8" r="2.5" stroke="#222" /></S>
    <S w={16} h={14} className="ml-[4px]"><path d="M1 13V4H11V13M4 4V13M7 4V13M1 8H11" stroke="#a33" /><circle cx="12" cy="4" r="3" fill="#f5c842" stroke="#c28a10" /></S>
    <ScrollArrow dir="left" className="ml-[8px]" />
    <div className="ml-[379px] w-[15px] h-[15px] rounded-[2px] border border-[#aaa] bg-gradient-to-b from-[#eeeeee] to-[#c6c6c6]" />
    <ScrollArrow dir="right" className="ml-[374px]" />
    <S w={9} h={9} className="ml-[14px]"><path d="M8 2V3M5 5V6M8 5V6M2 8V9M5 8V9M8 8V9" stroke="#999" /></S>
  </div>
);

const StatusBar = () => (
  <div className="h-[26px] flex items-center border-t border-[#777] bg-gradient-to-b from-[#ececec] to-[#b7b7b7] text-[12px]">
    <span className="ml-px w-[430px] tracking-[-0.1px] text-[#111] whitespace-nowrap">Щелчок - выбор, TAB - варианты, CTRL - добавление, SHIFT - снятие выбора</span>
    <S w={16} h={18}><rect x="1" y="8" width="7" height="8" fill="#4d8fd1" stroke="#225" /><rect x="9" y="8" width="6" height="8" stroke="#333" /><rect x="5" y="2" width="6" height="5" fill="#7eb043" stroke="#355" /></S>
    <div className="ml-[8px] w-[204px] h-[21px] flex items-center justify-end pr-[4px] bg-white">
      <Caret c="#999" />
    </div>
    <S w={16} h={18} className="ml-[7px]"><path d="M2 3H14L11 8H7L4 16H2Z" fill="#aaa" stroke="#888" /></S>
    <span className="ml-[6px] w-[21px] text-[#222]">:0</span>
    <div className="ml-[5px]"><S w={16} h={17}><rect x="0.5" y="0.5" width="15" height="15" fill="#fff" stroke="#333" /><path d="M0 3H16" stroke="#333" strokeWidth="2" /><path d="M2 7H4M6 7H14M2 10H4M6 10H14M2 13H4M6 13H14" stroke="#333" /></S></div>
    <div className="ml-[12px]"><S w={15} h={16}><path d="M1 1H14V15H1Z" fill="#a5a5a5" /><path d="M3 8H8M6 6L8 8L6 10M6 2V8" stroke="#eee" /></S></div>
    <div className="ml-[13px] w-[154px] h-[21px] flex items-center justify-between px-[3px] bg-white text-[#8a8a8a]">Главная модель<Caret c="#999" /></div>
    <S w={17} h={16} className="ml-[337px]"><circle cx="5" cy="5" r="3.5" stroke="#e0a92e" strokeWidth="1.8" /><circle cx="12" cy="5" r="3.5" stroke="#e0a92e" strokeWidth="1.8" /><path d="M8 6V15L10 13L12 16" stroke="#222" fill="#fff" /></S>
    <S w={4} h={14} className="ml-[8px]"><path d="M0 2H4M0 7H4M0 12H4" stroke="#3d7cc0" /></S>
    <S w={9} h={9} className="ml-[9px]"><path d="M8 2V3M5 5V6M8 5V6M2 8V9M5 8V9M8 8V9" stroke="#999" /></S>
  </div>
);

export default function App() {
  return (
    <div className="relative w-[1329px] h-[983px] overflow-hidden flex flex-col bg-gradient-to-b from-[#3f4449] via-[#171b1f] to-[#0f1316] [font-family:'Liberation_Sans',Arial,sans-serif]">
      <Logo />
      <div className="absolute left-[500px] top-[2px] w-[220px] h-[22px] rounded-full bg-[#70767b] blur-[10px]" />
      <div className="relative h-[27px] flex items-start pl-[47px] pt-[4px]">
        <QAT />
        <span className="ml-[40px] mt-[1px] w-[187px] shrink-0 text-[12px] text-[#0c0c0c] whitespace-nowrap">Проект1 - План этажа: Этаж 1</span>
        <InfoCenter />
        <div className="-mt-[4px]"><WinButtons /></div>
      </div>
      <div className="relative ml-[7px] mr-[3px] flex flex-col">
        <Tabs />
        <Ribbon />
        <div className="h-[27px] pt-[3px] flex items-center pl-[8px] bg-[#dbe5d5] text-[12px] text-[#111] border-b border-[#666]">Изменить | for rvt.dwg</div>
        <div className="h-[782px] flex bg-[#e6e6e6]">
          <div className="w-[219px] ml-px flex flex-col bg-[#f2f2f2]">
            <Properties />
            <Browser />
          </div>
          <div className="flex-1 ml-[4px] border-l border-t border-[#555] flex flex-col">
            <div className="h-[764px] flex">
              <div className="relative w-[1078px] bg-white">
                <Plan />
                <ViewButtons />
                <NavBar />
              </div>
              <div className="flex-1 flex flex-col items-center bg-[#f0f0f0] pt-[8px] pb-[6px]">
                <ScrollArrow dir="up" />
                <div className="mt-[360px] w-[15px] h-[15px] rounded-[2px] border border-[#aaa] bg-gradient-to-r from-[#eeeeee] to-[#c6c6c6]" />
                <ScrollArrow dir="down" className="mt-auto" />
              </div>
            </div>
            <ViewBar />
          </div>
        </div>
        <StatusBar />
      </div>
    </div>
  );
}
